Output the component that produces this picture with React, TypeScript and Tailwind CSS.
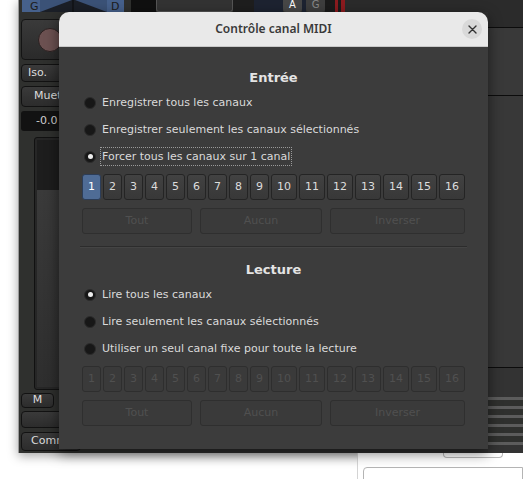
import React from 'react';

const channels = Array.from({ length: 16 }, (_, i) => i + 1);

interface ChanBtnProps {
  n: number;
  active?: boolean;
  disabled?: boolean;
}

const ChanBtn: React.FC<ChanBtnProps> = ({ n, active, disabled }) => {
  const width = n < 10 ? 'w-[19px]' : 'w-[26px]';
  let look = 'border-[#242424] bg-gradient-to-b from-[#424242] to-[#383838] text-[#dcdcdc]';
  if (active) look = 'border-[#2c3d58] bg-[#4f6c96] text-white';
  if (disabled) look = 'border-[#2e2e2e] bg-[#3a3a3a] text-[#505050]';
  return (
    <div className={`${width} h-[26px] shrink-0 rounded-[3px] border flex items-center justify-center text-[11px] ${look}`}>
      {n}
    </div>
  );
};

const ChannelRow: React.FC<{ disabled?: boolean; selected?: number }> = ({ disabled, selected }) => (
  <div className="flex gap-[2px]">
    {channels.map((n) => (
      <ChanBtn key={n} n={n} active={selected === n} disabled={disabled} />
    ))}
  </div>
);

const ActionRow: React.FC = () => (
  <div className="flex gap-[8px] mt-[8px]">
    {[
      ['Tout', 'w-[110px]'],
      ['Aucun', 'w-[122px]'],
      ['Inverser', 'w-[135px]'],
    ].map(([label, w]) => (
      <div
        key={label}
        className={`${w} h-[26px] rounded-[3px] border border-[#2f2f2f] bg-[#3a3a3a] flex items-center justify-center text-[11px] text-[#505050]`}
      >
        {label}
      </div>
    ))}
  </div>
);

const Radio: React.FC<{ label: string; checked?: boolean; focused?: boolean }> = ({ label, checked, focused }) => (
  <div className="h-[27px] flex items-center">
    <div className="ml-[2px] w-[12px] h-[12px] rounded-full bg-[#171717] border border-[#2b2b2b] flex items-center justify-center">
      {checked && <div className="w-[5px] h-[5px] rounded-full bg-[#ececec]" />}
    </div>
    <span
      className={`ml-[6px] text-[11px] leading-[15px] text-[#dadada] ${
        focused ? 'outline outline-1 outline-dotted outline-[#9a9a9a] outline-offset-[1px]' : ''
      }`}
    >
      {label}
    </span>
  </div>
);

const Heading: React.FC<{ children: React.ReactNode }> = ({ children }) => (
  <div className="h-[16px] leading-[16px] text-center text-[13px] font-bold text-[#e4e4e4]">{children}</div>
);

const Panner: React.FC = () => (
  <svg width="102" height="12" viewBox="0 0 102 12">
    <rect x="0" y="0" width="102" height="12" fill="#1b1f27" />
    <rect x="0" y="0" width="18" height="12" fill="#46618c" />
    <rect x="85" y="0" width="17" height="12" fill="#46618c" />
    <polygon points="18,0 50,0 18,12" fill="#3b5277" />
    <polygon points="85,0 53,0 85,12" fill="#3b5277" />
    <line x1="51" y1="0" x2="51" y2="12" stroke="#0d0d0d" />
    <text x="8" y="10" fontSize="11" fill="#1c1c1c" fontFamily="DejaVu Sans">G</text>
    <text x="89" y="10" fontSize="11" fill="#1c1c1c" fontFamily="DejaVu Sans">D</text>
  </svg>
);

const StripBtn: React.FC<{ h: string; w?: string; children?: React.ReactNode; className?: string }> = ({ h, w = 'w-[60px]', children, className = '' }) => (
  <div className={`${h} ${w} ml-[2px] rounded-[4px] border border-[#121212] bg-gradient-to-b from-[#3a3a3a] to-[#2c2c2c] flex items-center text-[11px] text-[#dcdcdc] ${className}`}>
    {children}
  </div>
);

export default function App() {
  return (
    <div className="relative w-[523px] h-[479px] overflow-hidden bg-white font-['DejaVu_Sans',sans-serif]">
      {/* mixer window behind */}
      <div className="absolute left-[18px] top-0 w-[505px] h-[453px] border-l border-[#9a9a9a] bg-[#2f302e] flex shadow-[0_3px_10px_rgba(0,0,0,0.35)]">
        <div className="w-[112px] flex flex-col">
          <div className="ml-[3px]">
            <Panner />
          </div>
          <div className="mt-[7px] ml-[2px] w-[60px] h-[41px] rounded-[4px] border border-[#141414] bg-gradient-to-b from-[#3a3a3a] to-[#2a2a2a] flex items-center pl-[16px]">
            <div className="w-[24px] h-[24px] rounded-full bg-[#6c5151] border border-[#2a2020]" />
          </div>
          <StripBtn h="h-[18px] mt-[4px]" className="pl-[6px]">Iso.</StripBtn>
          <StripBtn h="h-[21px] mt-[4px]" className="pl-[12px]">Muet</StripBtn>
          <div className="mt-[4px] ml-[2px] w-[60px] h-[20px] rounded-[3px] bg-[#121212] text-[11px] text-[#cfcfcf] flex items-center pl-[15px]">-0.0</div>
          <div className="mt-[6px] ml-[15px] w-[40px] h-[253px] rounded-[3px] border border-[#111] bg-[#262626] flex flex-col p-[2px]">
            <div className="h-[50px] bg-[#1d1d1d]" />
            <div className="flex-1 bg-gradient-to-b from-[#3a3a3a] to-[#2e2e2e]" />
          </div>
          <StripBtn h="h-[15px] mt-[3px]" w="w-[33px]" className="justify-center">M</StripBtn>
          <StripBtn h="h-[17px] mt-[3px]" />
          <StripBtn h="h-[19px] mt-[4px]" className="pl-[9px]">Comm</StripBtn>
        </div>
        <div className="flex-1 flex flex-col">
          <div className="h-[12px] flex items-stretch">
            <div className="w-[25px] bg-[#101010]" />
            <div className="w-[77px] rounded-b-[3px] border border-t-0 border-[#555] bg-[#333]" />
            <div className="w-[21px] bg-[#1e1e1e]" />
            <div className="w-[29px] bg-[#1d2331]" />
            <div className="w-[19px] rounded-b-[3px] bg-[#474747] text-[10px] leading-[10px] text-white text-center">A</div>
            <div className="w-[4px] bg-[#1d2331]" />
            <div className="w-[19px] rounded-b-[3px] bg-[#3e3e3e] text-[10px] leading-[10px] text-[#8a8a8a] text-center">G</div>
            <div className="w-[10px] bg-[#1b1b1b]" />
            <div className="w-[3px] bg-[#8c1b1f]" />
            <div className="w-[3px] bg-[#1b1b1b]" />
            <div className="w-[4px] bg-[#8c1b1f]" />
            <div className="flex-1 bg-[#2b2b2b]" />
          </div>
          <div className="flex-1 bg-[#2f2f2f]" />
        </div>
        <div className="w-[35px] flex flex-col">
          <div className="h-[28px] bg-[#2b2b2b] border-b border-[#0c0c0c]" />
          <div className="h-[68px] bg-[#393939] border-b border-[#0c0c0c]" />
          <div className="h-[272px] bg-[#383838] border-b border-[#0c0c0c]" />
          <div className="h-[29px] bg-[#333]" />
          <div className="flex flex-col gap-[6px]">
            {[0, 1, 2, 3, 4, 5].map((i) => (
              <div key={i} className="h-[3px] bg-[#5c5c5c]" />
            ))}
          </div>
          <div className="flex-1 bg-[#333]" />
        </div>
      </div>

      {/* bottom right panel of another window */}
      <div className="absolute left-[357px] top-[453px] w-[166px] h-[26px] border-l border-[#d4d4d4] bg-white">
        <div className="ml-[85px] w-[60px] h-[5px] rounded-b-[4px] border border-t-0 border-[#b8b8b8]" />
        <div className="mt-[9px] ml-[5px] h-[20px] rounded-tl-[4px] border border-[#b4b4b4]" />
      </div>

      {/* dialog */}
      <div className="absolute left-[59px] top-[12px] w-[429px] h-[437px] rounded-t-[10px] overflow-hidden flex flex-col shadow-[0_4px_14px_rgba(0,0,0,0.55)]">
        <div className="relative h-[35px] shrink-0 bg-[#e9e9e9] border-b border-[#c9c9c9] flex items-center justify-center">
          <span className="font-['Noto_Sans',sans-serif] font-semibold text-[12px] text-[#3a3a3a]">Contrôle canal MIDI</span>
          <div className="absolute right-[6px] top-[7px] w-[20px] h-[20px] rounded-full bg-[#d9d9d9] flex items-center justify-center">
            <svg width="9" height="9" viewBox="0 0 9 9">
              <path d="M1 1 L8 8 M8 1 L1 8" stroke="#333" strokeWidth="1.4" strokeLinecap="round" />
            </svg>
          </div>
        </div>
        <div className="flex-1 bg-[#3c3c3c] px-[23px] pt-[23px]">
          <Heading>Entrée</Heading>
          <div className="mt-[3px]">
            <Radio label="Enregistrer tous les canaux" />
            <Radio label="Enregistrer seulement les canaux sélectionnés" />
            <Radio label="Forcer tous les canaux sur 1 canal" checked focused />
          </div>
          <div className="mt-[4px]">
            <ChannelRow selected={1} />
          </div>
          <ActionRow />
          <div className="mt-[12px] mx-[-2px] h-[2px] bg-[#2c2c2c] border-b border-[#444]" />
          <div className="mt-[14px]">
            <Heading>Lecture</Heading>
          </div>
          <div className="mt-[3px]">
            <Radio label="Lire tous les canaux" checked />
            <Radio label="Lire seulement les canaux sélectionnés" />
            <Radio label="Utiliser un seul canal fixe pour toute la lecture" />
          </div>
          <div className="mt-[4px]">
            <ChannelRow disabled />
          </div>
          <ActionRow />
        </div>
      </div>
    </div>
  );
}
